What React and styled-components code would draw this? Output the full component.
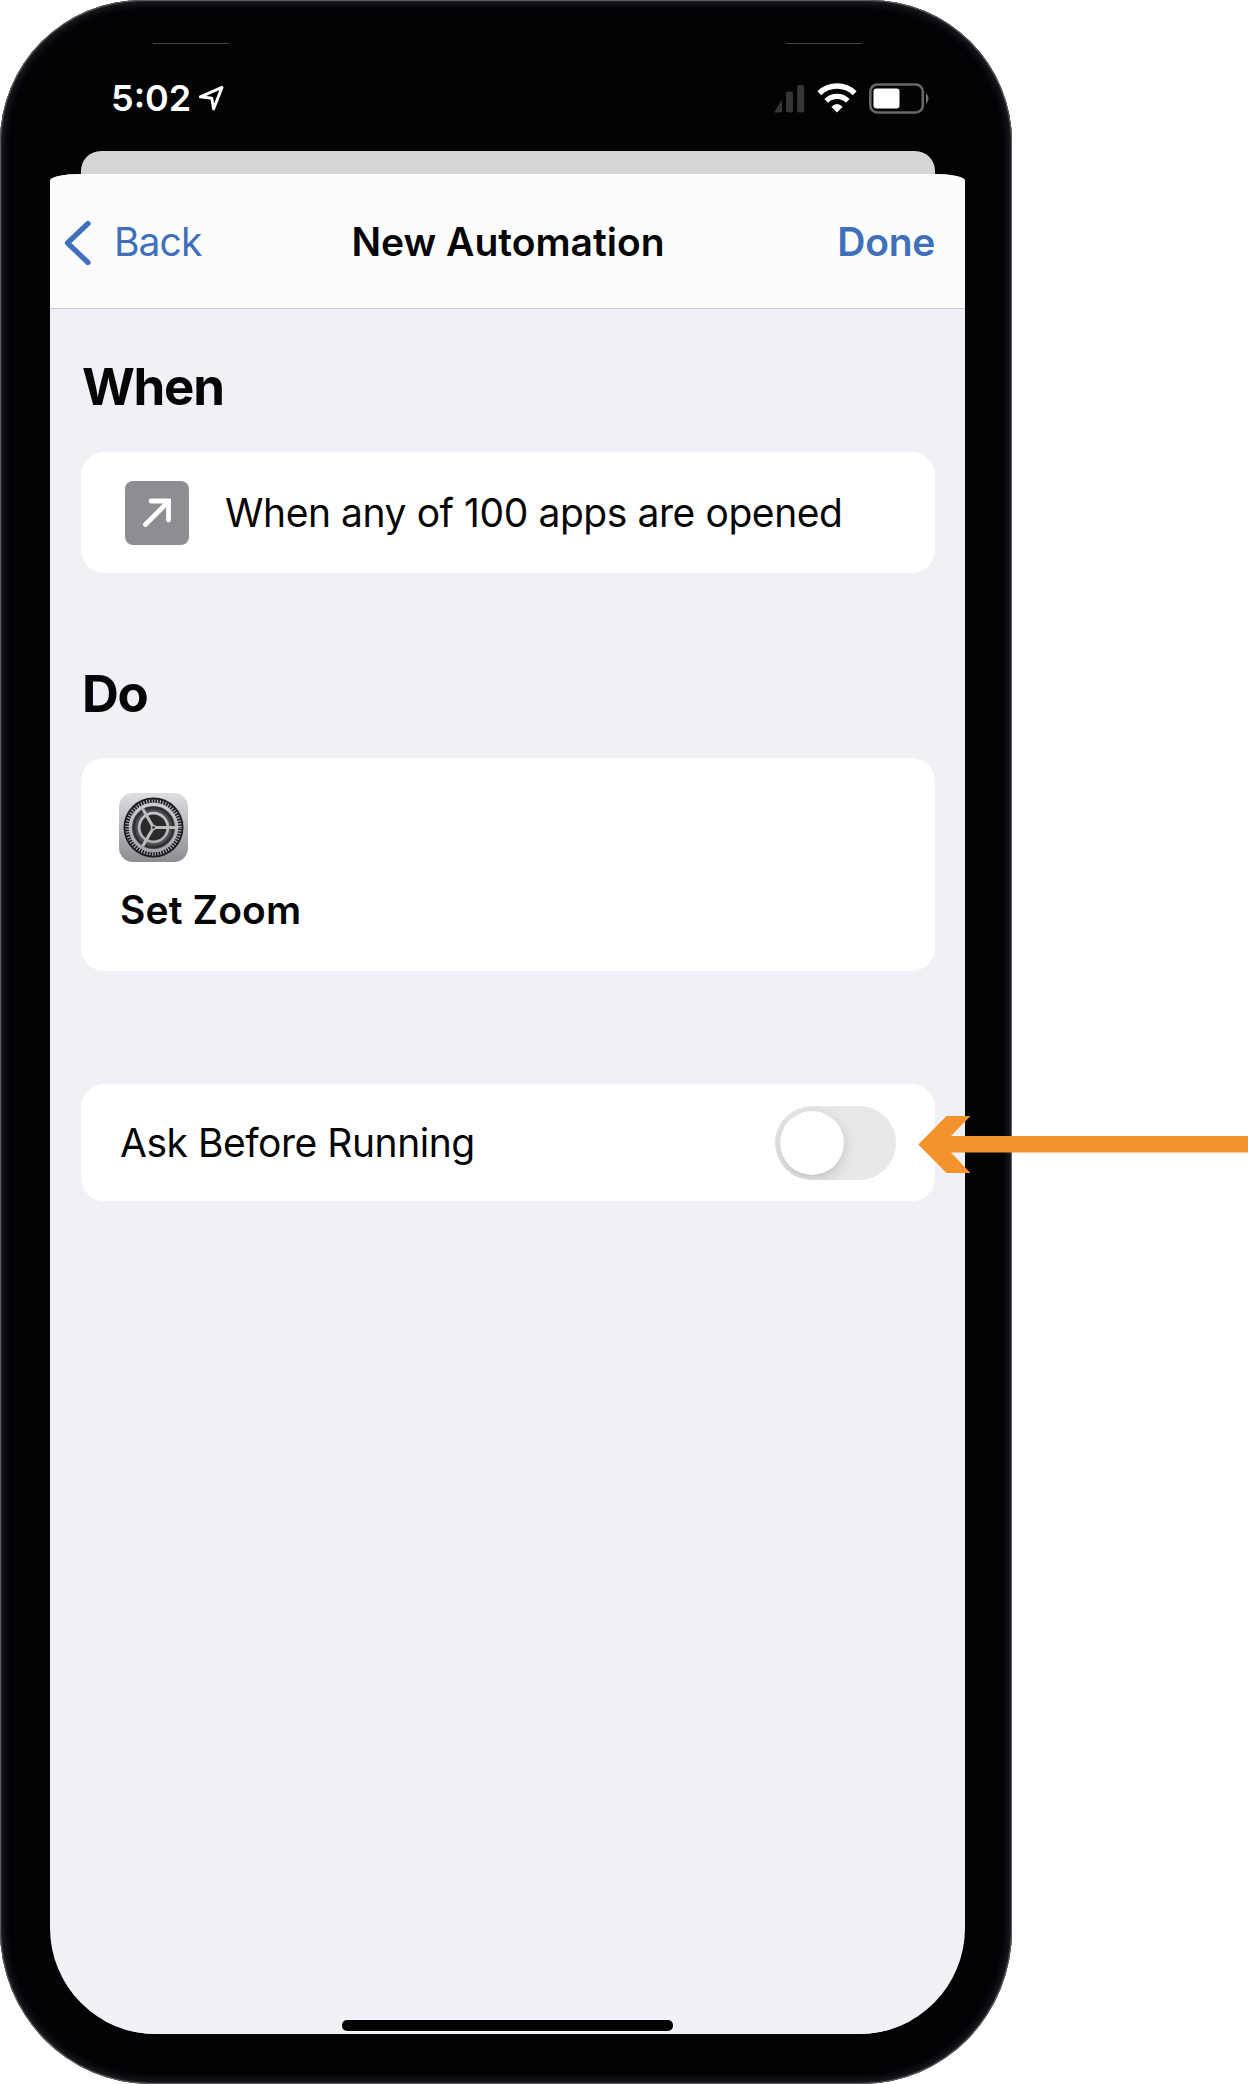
import React from "react";
import styled, { createGlobalStyle } from "styled-components";

const GlobalStyle = createGlobalStyle`
  * { box-sizing: border-box; }
  html, body { margin: 0; background: #fff; }
  body { font-family: Inter, "Liberation Sans", sans-serif; color: #060606; overflow: hidden; }
`;

const Stage = styled.main`
  position: relative;
  width: 1248px;
  height: 2084px;
  overflow: hidden;
`;

const Phone = styled.div`
  width: 1012px;
  height: 2084px;
  padding: 0 47px 50px 50px;
  display: flex;
  flex-direction: column;
  background: #020305;
  border-radius: 142px 142px 150px 150px / 142px 142px 154px 154px;
  box-shadow: inset 0 0 1px 1px #66666c, inset 0 0 9px 3px #26262c;
`;

const Hairlines = styled.div`
  display: flex;
  justify-content: space-between;
  padding: 43px 103px 0;
  height: 44px;
`;

const Hairline = styled.span`
  width: 76px;
  height: 1px;
  background: #444;
`;

const StatusBar = styled.div`
  height: 107px;
  padding: 38px 34px 0 61px;
  display: flex;
  justify-content: space-between;
  align-items: flex-start;
`;

const StatusGroup = styled.div`
  height: 34px;
  display: flex;
  align-items: center;
  gap: ${(p) => p.$gap}px;

  svg { margin-bottom: 2px; }
`;

const Label = styled.span`
  display: block;
  font-size: ${(p) => p.$size}px;
  font-weight: ${(p) => p.$weight || 400};
  letter-spacing: ${(p) => p.$track || 0}px;
  color: ${(p) => p.$color || "#060606"};
  line-height: 1.2;
  white-space: nowrap;
  padding-top: ${(p) => p.$drop || 0}px;
  padding-left: ${(p) => p.$inset || 0}px;
`;

const BackSheet = styled.div`
  height: 23px;
  margin: 0 30.5px 0 31px;
  background: #d5d5d7;
  border-radius: 20px 20px 0 0;
`;

const Screen = styled.div`
  flex: 1;
  display: flex;
  flex-direction: column;
  background: #f0f1f6;
  border-radius: 30px 30px 106px 106px / 7px 7px 106px 106px;
  overflow: hidden;
`;

const NavBar = styled.header`
  height: 135px;
  padding: 1px 14px 0;
  display: grid;
  grid-template-columns: 1fr auto 1fr;
  align-items: center;
  background: #fcfcfd;
  border-bottom: 1px solid #cbcbcf;
`;

const NavButton = styled.button`
  display: flex;
  align-items: center;
  gap: 22px;
  padding: 0;
  border: 0;
  margin-right: ${(p) => (p.$side === "end" ? 16 : 0)}px;
  background: none;
  font-family: inherit;
  justify-self: ${(p) => p.$side};
`;

const Content = styled.section`
  flex: 1;
  padding: 0 30.5px 0 31px;
  display: flex;
  flex-direction: column;
`;

const Heading = styled.h2`
  margin: ${(p) => p.$top}px 0 ${(p) => p.$bottom}px 1px;
  font-size: 51px;
  line-height: 60px;
  font-weight: 700;
  letter-spacing: ${(p) => p.$track}px;
`;

const Card = styled.div`
  height: ${(p) => p.$height}px;
  margin-top: ${(p) => p.$top || 0}px;
  padding: ${(p) => p.$pad};
  display: flex;
  flex-direction: ${(p) => (p.$stack ? "column" : "row")};
  align-items: ${(p) => (p.$stack ? "flex-start" : "center")};
  justify-content: ${(p) => (p.$spread ? "space-between" : "flex-start")};
  gap: ${(p) => p.$gap || 0}px;
  background: #fff;
  border-radius: 23px;
`;

const IconTile = styled.div`
  width: 64px;
  height: 64px;
  flex: none;
  border-radius: 8px;
  background: #8e8d92;
`;

const Switch = styled.div`
  width: 121px;
  height: 74px;
  padding: 5px;
  border-radius: 37px;
  background: #e7e8e8;
  overflow: hidden;
`;

const Knob = styled.div`
  width: 64px;
  height: 64px;
  border-radius: 50%;
  background: #fff;
  box-shadow: 0 4px 14px rgba(0, 0, 0, 0.16), 0 1px 2px rgba(0, 0, 0, 0.06);
`;

const HomeArea = styled.div`
  height: 14px;
  display: flex;
  justify-content: center;
  background: #f0f1f6;
`;

const HomeIndicator = styled.div`
  width: 331px;
  height: 11px;
  border-radius: 5px;
  background: #020202;
  box-shadow: 0 0 0 1px #fafafc;
`;

const Pointer = styled.svg`
  position: absolute;
  left: 918px;
  top: 1116px;
`;

function LocationIcon() {
  return (
    <svg width="27" height="27" viewBox="0 0 27 27">
      <path d="M2.3 11.8 24 2.4 15.6 24 13.8 13.2Z" fill="none" stroke="#fff" strokeWidth="2.9" strokeLinejoin="round" />
    </svg>
  );
}

function SignalIcon() {
  return (
    <svg width="36" height="29" viewBox="0 0 36 29" fill="#363636">
      <path d="M5 28.500 13 15.500V26.500a2 2 0 0 1-2 2Z" />
      <rect x="17" y="7.500" width="7" height="21" rx="2" />
      <rect x="28.200" y="1" width="7" height="27.500" rx="2" />
    </svg>
  );
}

function WifiIcon() {
  return (
    <svg width="40" height="30" viewBox="0 0 40 30" fill="none" stroke="#fff" strokeWidth="5.600">
      <path d="M2.300 10.200A25.500 25.500 0 0 1 37.700 10.200" />
      <path d="M9.200 17.800A15.500 15.500 0 0 1 30.800 17.800" strokeWidth="5.200" />
      <path d="M20 29.500 14.300 23.700Q20 18.500 25.700 23.700Z" fill="#fff" stroke="none" />
    </svg>
  );
}

function BatteryIcon() {
  return (
    <svg width="62" height="31" viewBox="0 0 62 31">
      <rect x="1.300" y="1.500" width="52.500" height="28" rx="7" fill="none" stroke="#686868" strokeWidth="2.600" />
      <rect x="4.500" y="5.500" width="26" height="20" rx="3" fill="#fff" />
      <path d="M57 10Q62 15.500 57 21Z" fill="#777" />
    </svg>
  );
}

function ChevronIcon() {
  return (
    <svg width="28" height="50" viewBox="0 0 28 50">
      <path d="M24 6.500 3.500 26 24 45.500" fill="none" stroke="#3f70b9" strokeWidth="5.200" strokeLinecap="round" strokeLinejoin="round" />
    </svg>
  );
}

function OpenArrowIcon() {
  return (
    <svg width="64" height="64" viewBox="0 0 64 64" fill="none" stroke="#fff" strokeWidth="4.800" strokeLinecap="round">
      <path d="M20.500 43.500 43.500 20.500" />
      <path d="M26 20H43.500V39" />
    </svg>
  );
}

function SettingsIcon() {
  return (
    <svg width="69" height="69" viewBox="0 0 69 69">
      <defs>
        <linearGradient id="tile" x1="0" y1="0" x2="0" y2="1">
          <stop offset="0" stopColor="#dedee2" />
          <stop offset="1" stopColor="#8d8c92" />
        </linearGradient>
        <linearGradient id="gear" x1="0" y1="0" x2="0" y2="1">
          <stop offset="0" stopColor="#cfcfd2" />
          <stop offset="1" stopColor="#a5a5a9" />
        </linearGradient>
      </defs>
      <rect width="69" height="69" rx="14" fill="url(#tile)" />
      <circle cx="34.500" cy="34.500" r="30" fill="#1c1c1f" />
      <circle cx="34.500" cy="34.500" r="26.200" fill="none" stroke="#a9a9ad" strokeWidth="4" strokeDasharray="1.200 1.544" />
      <circle cx="34.500" cy="34.500" r="24.800" fill="url(#gear)" />
      <circle cx="34.500" cy="34.500" r="18.600" fill="none" stroke="#4e4e51" strokeWidth="5.800" />
      <circle cx="34.500" cy="34.500" r="19.600" fill="none" stroke="#303033" strokeWidth="2.600" />
      <circle cx="34.500" cy="34.500" r="13" fill="#2a2a2d" />
      {[0, 120, 240].map((angle) => (
        <path key={angle} d="M34.500 34.500H56" transform={`rotate(${angle} 34.500 34.500)`} stroke="#bdbdc0" strokeWidth="3" />
      ))}
      <circle cx="34.500" cy="34.500" r="2.800" fill="#b8b8bb" />
      <circle cx="34.500" cy="34.500" r="1.300" fill="#2a2a2d" />
    </svg>
  );
}

export default function App() {
  return (
    <>
      <GlobalStyle />
      <Stage>
        <Phone>
          <Hairlines>
            <Hairline />
            <Hairline />
          </Hairlines>
          <StatusBar>
            <StatusGroup $gap={7}>
              <Label $size={36} $weight={600} $color="#fff">5:02</Label>
              <LocationIcon />
            </StatusGroup>
            <StatusGroup $gap={12}>
              <SignalIcon />
              <WifiIcon />
              <BatteryIcon />
            </StatusGroup>
          </StatusBar>
          <BackSheet />
          <Screen>
            <NavBar>
              <NavButton $side="start">
                <ChevronIcon />
                <Label $size={39} $track={-0.9} $drop={2} $color="#3f70b9">Back</Label>
              </NavButton>
              <Label $size={39} $weight={600} $drop={1} $inset={1}>New Automation</Label>
              <NavButton $side="end">
                <Label $size={39} $weight={600} $track={-0.3} $drop={2} $color="#3f70b9">Done</Label>
              </NavButton>
            </NavBar>
            <Content>
              <Heading $top={48} $bottom={35} $track={-1.3}>When</Heading>
              <Card $height={121} $pad="0 44px" $gap={36}>
                <IconTile><OpenArrowIcon /></IconTile>
                <Label $size={39} $track={-0.43} $drop={2}>When any of 100 apps are opened</Label>
              </Card>
              <Heading $top={91} $bottom={34} $track={-1.3}>Do</Heading>
              <Card $height={213} $pad="35px 38px" $stack $gap={25}>
                <SettingsIcon />
                <Label $size={39} $weight={600} $track={0.15} $inset={1}>Set Zoom</Label>
              </Card>
              <Card $height={117} $top={113} $pad="0 38.5px 0 39px" $spread>
                <Label $size={39} $track={-0.47} $drop={1}>Ask Before Running</Label>
                <Switch><Knob /></Switch>
              </Card>
            </Content>
            <HomeArea><HomeIndicator /></HomeArea>
          </Screen>
        </Phone>
        <Pointer width="330" height="57" viewBox="0 0 330 57">
          <path d="M0.300 28.500 28.500 0H52.500L33 20H330V36.600H33L52.500 57H28.500Z" fill="#f4922b" />
        </Pointer>
      </Stage>
    </>
  );
}
